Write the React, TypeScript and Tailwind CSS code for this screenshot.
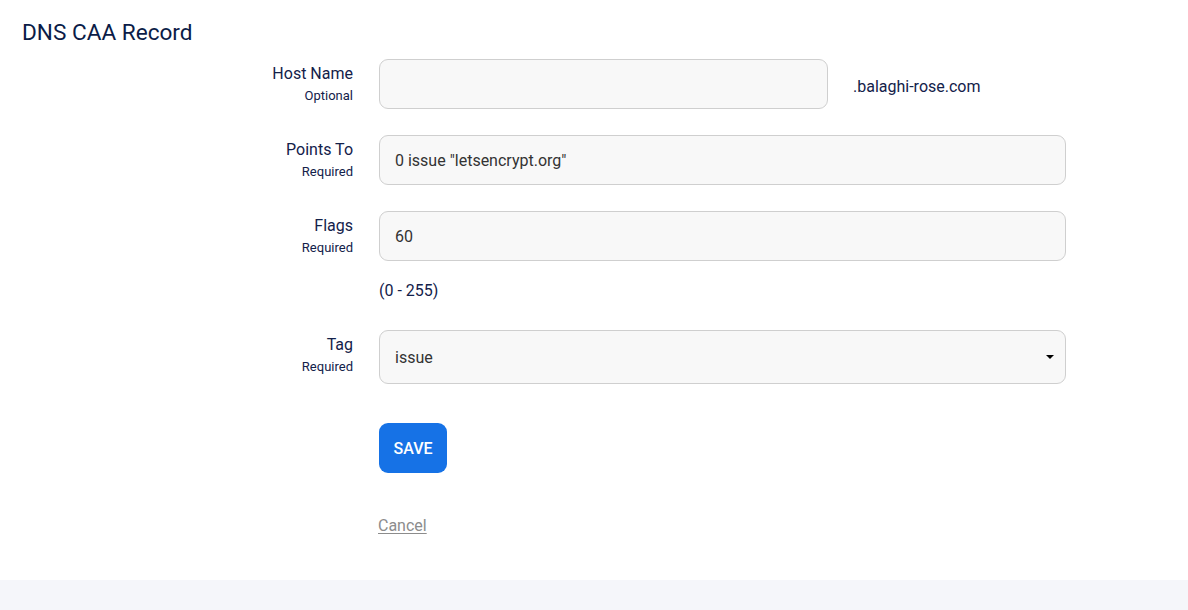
const fieldLabel = (title: string, note: string) => (
  <div className="flex flex-col items-end pt-[4px] text-[#13214a]">
    <span className="text-[16px] leading-[22px]">{title}</span>
    <span className="text-[13px] leading-[18px] mt-[2px]">{note}</span>
  </div>
);

const inputCls =
  "h-[50px] rounded-[9px] border border-[#cfcfcf] bg-[#f8f8f8] px-[15px] flex items-center text-[16px] text-[#333333]";

const App = () => {
  return (
    <div className="min-h-screen bg-white font-['Roboto',sans-serif]">
      <div className="h-[580px]">
        <h1 className="h-[59px] px-[22px] pt-[18px] text-[22.6px] leading-[30px] font-normal text-[#0b1c47]">
          DNS CAA Record
        </h1>

        <div className="grid grid-cols-[353px_687px] gap-x-[26px]">
          {/* Host Name */}
          {fieldLabel("Host Name", "Optional")}
          <div className="flex items-center">
            <div className={`${inputCls} w-[449px]`} />
            <span className="ml-[25px] mt-[5px] text-[16px] text-[#13214a]">
              .balaghi-rose.com
            </span>
          </div>

          {/* Points To */}
          <div className="mt-[26px]">{fieldLabel("Points To", "Required")}</div>
          <div className={`${inputCls} mt-[26px]`}>
            <span className="mt-[1px]">0 issue "letsencrypt.org"</span>
          </div>

          {/* Flags */}
          <div className="mt-[26px]">{fieldLabel("Flags", "Required")}</div>
          <div className="mt-[26px]">
            <div className={`${inputCls} h-[49px]`}>
              <span className="mt-[1px]">60</span>
            </div>
            <p className="mt-[18px] text-[16px] leading-[24px] text-[#13214a]">(0 - 255)</p>
          </div>

          {/* Tag */}
          <div className="mt-[27px]">{fieldLabel("Tag", "Required")}</div>
          <div
            className={`${inputCls} h-[54px] mt-[27px] justify-between pr-[11px]`}
          >
            <span className="mt-[1px]">issue</span>
            <span className="h-0 w-0 border-x-[4px] border-t-[4px] border-x-transparent border-t-black" />
          </div>

          <div />
          <div className="mt-[39px] flex flex-col items-start">
            <button className="h-[50px] w-[68px] rounded-[9px] bg-[#1672e6] pt-[2px] text-[16px] font-medium text-white">
              SAVE
            </button>
            <a className="mt-[43px] -ml-[1px] text-[16px] leading-[20px] text-[#8c8c8c] underline underline-offset-2">
              Cancel
            </a>
          </div>
        </div>
      </div>
      <div className="h-[30px] bg-[#f5f6fa]" />
    </div>
  );
};

export default App;
